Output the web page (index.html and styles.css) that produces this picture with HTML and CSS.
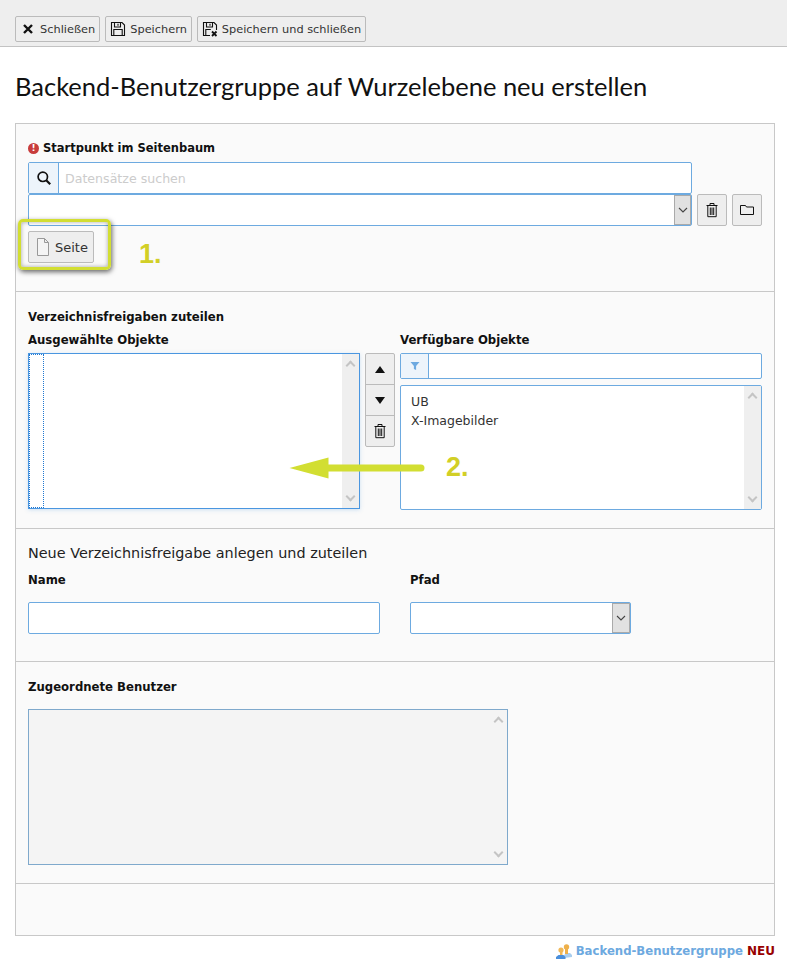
FILE: index.html
```html
<!DOCTYPE html>
<html lang="de">
<head>
  <meta charset="UTF-8">
  <meta name="viewport" content="width=device-width, initial-scale=1.0">
  <title>Backend-Benutzergruppe</title>
  <link rel="stylesheet" href="styles.css">
</head>
<body>

  <div class="toolbar">
    <button class="btn" type="button">
      <svg class="icon" viewBox="0 0 16 16"><path d="M4 4l8 8M12 4l-8 8" fill="none" stroke="#111" stroke-width="2.400"/></svg>
      <span>Schließen</span>
    </button>
    <button class="btn" type="button">
      <svg class="icon" viewBox="0 0 16 16"><path d="M1.500 1.500h10.500l2.500 2.500v10.500h-13zM4.500 1.500v4.500h6v-4.500M8 2.800v2M3.800 14.500v-6h8.400v6" fill="none" stroke="#111" stroke-width="1.100"/></svg>
      <span>Speichern</span>
    </button>
    <button class="btn" type="button">
      <svg class="icon" viewBox="0 0 16 16"><path d="M8 14.500h-6.500v-13h10.500l2.500 2.500v5M4.500 1.500v4.500h6v-4.500M8 2.800v2M3.800 14v-5.500h5" fill="none" stroke="#111" stroke-width="1.100"/><path d="M10 10.500l4.500 4.500M14.500 10.500l-4.500 4.500" stroke="#111" stroke-width="1.800"/></svg>
      <span>Speichern und schließen</span>
    </button>
  </div>

  <h1 class="page-title">Backend-Benutzergruppe auf Wurzelebene neu erstellen</h1>

  <div class="panel">

    <div class="section section-start">
      <div class="label label-required"><span class="required-mark">!</span>Startpunkt im Seitenbaum</div>
      <div class="search-row">
        <span class="addon addon-search">
          <svg class="icon" viewBox="0 0 16 16"><circle cx="6.800" cy="6.800" r="4.700" fill="none" stroke="#111" stroke-width="1.700"/><path d="M10.200 10.200l4 4" stroke="#111" stroke-width="2.200"/></svg>
        </span>
        <input class="search-input" type="text" placeholder="Datensätze suchen">
      </div>
      <div class="select-row">
        <div class="select select-wide"><span class="select-arrow"><svg viewBox="0 0 10 6"><path d="M1 1l4 4 4-4" fill="none" stroke="#444" stroke-width="1.100"/></svg></span></div>
        <button class="btn btn-square" type="button">
          <svg class="icon" viewBox="0 0 16 16"><path d="M2.500 3.500h11M6 3.500v-2h4v2M3.800 3.500v11.200h8.400v-11.200M6.300 5.500v7.500M8 5.500v7.500M9.700 5.500v7.500" fill="none" stroke="#111" stroke-width="1"/></svg>
        </button>
        <button class="btn btn-square" type="button">
          <svg class="icon" viewBox="0 0 16 16"><path d="M1.500 3.500h5l1 1.500h7v7.500h-13z" fill="none" stroke="#111" stroke-width="1"/></svg>
        </button>
      </div>
      <button class="btn btn-page" type="button">
        <svg class="icon icon-page" viewBox="0 0 14 18"><path d="M1.500 .5h7l4 4v13h-11zM8.500 .5v4h4" fill="#f4f4f4" stroke="#999" stroke-width="1"/></svg>
        <span>Seite</span>
      </button>
      <div class="note-box"></div>
      <div class="note note-one">1.</div>
    </div>

    <div class="section section-mounts">
      <div class="label label-group">Verzeichnisfreigaben zuteilen</div>
      <div class="mounts">
        <div class="mounts-left">
          <div class="label label-list">Ausgewählte Objekte</div>
          <div class="listbox listbox-selected">
            <div class="list-focus"></div>
            <div class="scrollbar"><span class="arrow-up"></span><span class="arrow-down"></span></div>
          </div>
        </div>
        <div class="move-buttons">
          <button class="move-btn" type="button"><span class="tri tri-up"></span></button>
          <button class="move-btn" type="button"><span class="tri tri-down"></span></button>
          <button class="move-btn" type="button">
            <svg class="icon" viewBox="0 0 16 16"><path d="M2.500 3.500h11M6 3.500v-2h4v2M3.800 3.500v11.200h8.400v-11.200M6.300 5.500v7.500M8 5.500v7.500M9.700 5.500v7.500" fill="none" stroke="#111" stroke-width="1"/></svg>
          </button>
        </div>
        <div class="mounts-right">
          <div class="label label-list">Verfügbare Objekte</div>
          <div class="filter-row">
            <span class="addon addon-filter">
              <svg class="icon-filter" viewBox="0 0 10 10"><path d="M.5 1h9l-3.400 4v4l-2.200-1v-3z" fill="#6da9e0"/></svg>
            </span>
            <span class="filter-input"></span>
          </div>
          <div class="listbox listbox-available">
            <ul class="items">
              <li>UB</li>
              <li>X-Imagebilder</li>
            </ul>
            <div class="scrollbar"><span class="arrow-up"></span><span class="arrow-down"></span></div>
          </div>
        </div>
      </div>
      <svg class="note-arrow" viewBox="0 0 135 22"><path d="M0 11L39 .5v7h92.500a3.500 3.500 0 0 1 0 7H39v7z" fill="#d2de32"/></svg>
      <div class="note note-two">2.</div>
    </div>

    <div class="section section-new">
      <div class="section-title">Neue Verzeichnisfreigabe anlegen und zuteilen</div>
      <div class="new-fields">
        <div class="field-name">
          <div class="label">Name</div>
          <div class="text-box"></div>
        </div>
        <div class="field-path">
          <div class="label">Pfad</div>
          <div class="select"><span class="select-arrow"><svg viewBox="0 0 10 6"><path d="M1 1l4 4 4-4" fill="none" stroke="#444" stroke-width="1.100"/></svg></span></div>
        </div>
      </div>
    </div>

    <div class="section section-users">
      <div class="label">Zugeordnete Benutzer</div>
      <div class="listbox listbox-users">
        <div class="scrollbar"><span class="arrow-up"></span><span class="arrow-down"></span></div>
      </div>
    </div>

    <div class="section section-empty"></div>
  </div>

  <div class="footer">
    <svg class="icon-group" viewBox="0 0 16 16">
      <path d="M8 15v-3l3-2h3l2 2v2z" fill="#a9cdee"/>
      <circle cx="10.500" cy="4" r="2.700" fill="#eeb04a"/>
      <path d="M9 6h3v5H9z" fill="#eeb04a"/>
      <circle cx="5" cy="7" r="2.600" fill="#f0b858"/>
      <path d="M4 9h2.500v3H4z" fill="#f0b858"/>
      <path d="M0 16v-2l2.500-2h5l2 2v2z" fill="#4a8fdc"/>
    </svg>
    <span class="footer-type">Backend-Benutzergruppe</span>
    <span class="footer-new">NEU</span>
  </div>

</body>
</html>
```

FILE: styles.css
```css
* {
  box-sizing: border-box;
}

html, body {
  height: 964px;
  overflow: hidden;
}

body {
  font-family: "DejaVu Sans", Verdana, sans-serif;
  font-size: 11px;
  color: #111;
  background-color: #fff;
  margin: 0;
  padding: 0;
}

.toolbar {
  display: flex;
  gap: 5px;
  height: 47px;
  padding: 16px 15px 0;
  background-color: #eee;
  border-bottom: 1px solid #c3c3c3;
}

.btn {
  display: flex;
  align-items: center;
  gap: 4px;
  height: 26px;
  padding: 0 4px;
  font-family: inherit;
  font-size: 11.350px;
  color: #333;
  background-color: #eee;
  border: 1px solid #bbb;
  border-radius: 2px;
}

.icon {
  width: 16px;
  height: 16px;
  flex: none;
}

.page-title {
  margin: 24px 0 22px 15px;
  font-family: Lato, sans-serif;
  font-size: 25.500px;
  line-height: 30px;
  font-weight: 400;
  color: #111;
}

.panel {
  width: 760px;
  height: 813px;
  margin-left: 15px;
  background-color: #fafafa;
  border: 1px solid #c8c8c8;
}

.section {
  position: relative;
  padding: 0 12px;
  border-bottom: 1px solid #c8c8c8;
}

.section-start {
  height: 168px;
  padding-top: 17px;
}

.section-mounts {
  height: 237px;
  padding-top: 18px;
}

.section-new {
  height: 133px;
  padding-top: 16px;
}

.section-users {
  height: 222px;
  padding-top: 18px;
}

.section-empty {
  height: 51px;
  border-bottom: none;
}

.label {
  font-weight: 700;
  font-size: 11.700px;
  line-height: 14px;
  color: #111;
}

.label-required {
  display: flex;
  align-items: center;
  gap: 4px;
  font-size: 11.500px;
}

.required-mark {
  width: 11px;
  height: 11px;
  font-size: 9px;
  line-height: 11px;
  text-align: center;
  color: #fff;
  background-color: #c83c3c;
  border-radius: 50%;
}

.search-row {
  display: flex;
  width: 664px;
  height: 32px;
  margin-top: 7px;
  background-color: #fff;
  border: 1px solid #6daae0;
  border-radius: 2px;
}

.addon {
  display: flex;
  align-items: center;
  justify-content: center;
  flex: none;
  background-color: #edf4fb;
  border-right: 1px solid #6daae0;
}

.addon-search {
  width: 30px;
}

.search-input {
  flex: 1;
  padding: 0 6px;
  font-family: inherit;
  font-size: 12.600px;
  border: none;
  outline: none;
  background: transparent;
}

.search-input::placeholder {
  color: #ccc;
}

.select-row {
  display: flex;
  gap: 5px;
}

.select {
  display: flex;
  justify-content: flex-end;
  height: 32px;
  background-color: #fff;
  border: 1px solid #6daae0;
  border-radius: 2px;
}

.select-wide {
  width: 664px;
}

.select-arrow {
  display: flex;
  align-items: center;
  justify-content: center;
  width: 17px;
  background-color: #e1e1e1;
  border: 1px solid #aaa;
}

.select-arrow svg {
  width: 10px;
  height: 6px;
}

.btn-square {
  justify-content: center;
  width: 30px;
  height: 32px;
  padding: 0;
}

.btn-page {
  height: 32px;
  width: 66px;
  margin-top: 5px;
  padding: 0 6px 0 7px;
  gap: 5px;
  font-size: 13px;
}

.icon-page {
  width: 14px;
  height: 18px;
}

.note-box {
  position: absolute;
  left: 2px;
  top: 95px;
  width: 93px;
  height: 51px;
  border: 3px solid #d2de32;
  border-radius: 5px;
  box-shadow: 1px 2px 5px rgba(0, 0, 0, 0.6), inset 0 0 4px rgba(0, 0, 0, 0.35);
}

.note {
  position: absolute;
  font-family: "Liberation Sans", Arial, sans-serif;
  font-size: 27px;
  line-height: 28px;
  font-weight: 700;
  color: #d2cf26;
}

.note-one {
  left: 123px;
  top: 116px;
}

.note-two {
  left: 430px;
  top: 161px;
}

.note-arrow {
  position: absolute;
  left: 273px;
  top: 165px;
  width: 136px;
  height: 22px;
  z-index: 2;
}

.mounts {
  display: flex;
  gap: 5px;
  margin-top: 9px;
}

.mounts-left {
  width: 332px;
}

.label-list {
  height: 14px;
}

.label-group {
  height: 14px;
}

.listbox {
  position: relative;
  background-color: #fff;
  border: 1px solid #6daae0;
}

.listbox-selected {
  height: 156px;
  margin-top: 6px;
  border-color: #4a96e0;
  box-shadow: 0 1px 4px rgba(74, 150, 224, 0.25);
}

.list-focus {
  width: 15px;
  height: 100%;
  border: 1px dotted #1f78d1;
}

.scrollbar {
  position: absolute;
  top: 0;
  right: 0;
  bottom: 0;
  width: 17px;
  background-color: #efefef;
}

.arrow-up,
.arrow-down {
  position: absolute;
  left: 5px;
  width: 7px;
  height: 7px;
  border-left: 2px solid #c4c4c4;
  border-top: 2px solid #c4c4c4;
  transform: rotate(45deg);
}

.arrow-up {
  top: 8px;
}

.arrow-down {
  bottom: 8px;
  transform: rotate(225deg);
}

.move-buttons {
  display: flex;
  flex-direction: column;
  width: 30px;
  height: 94px;
  margin-top: 20px;
  background-color: #eee;
  border: 1px solid #bbb;
  border-radius: 2px;
}

.move-btn {
  display: flex;
  align-items: center;
  justify-content: center;
  flex: 1;
  padding: 0;
  background: transparent;
  border: none;
  border-bottom: 1px solid #bbb;
}

.move-btn:last-child {
  border-bottom: none;
}

.tri {
  width: 0;
  height: 0;
  border-left: 5px solid transparent;
  border-right: 5px solid transparent;
}

.tri-up {
  border-bottom: 7px solid #111;
}

.tri-down {
  border-top: 7px solid #111;
}

.mounts-right {
  width: 362px;
}

.filter-row {
  display: flex;
  height: 26px;
  margin-top: 6px;
  background-color: #fff;
  border: 1px solid #6daae0;
  border-radius: 2px;
}

.addon-filter {
  width: 28px;
}

.icon-filter {
  width: 10px;
  height: 10px;
}

.filter-input {
  flex: 1;
}

.listbox-available {
  height: 125px;
  margin-top: 6px;
  border-radius: 2px;
}

.items {
  list-style: none;
  margin: 0;
  padding: 6px 10px;
  font-size: 12.500px;
  color: #333;
}

.items li {
  height: 19px;
  line-height: 19px;
}

.section-title {
  font-size: 14.400px;
  line-height: 16px;
  color: #222;
}

.new-fields {
  display: flex;
  gap: 30px;
  margin-top: 12px;
}

.field-name {
  width: 352px;
}

.field-path {
  width: 221px;
}

.text-box {
  height: 32px;
  margin-top: 15px;
  background-color: #fff;
  border: 1px solid #6daae0;
  border-radius: 2px;
}

.field-path .select {
  margin-top: 15px;
}

.field-path .select-arrow {
  width: 18px;
}

.listbox-users {
  width: 480px;
  height: 156px;
  margin-top: 15px;
  background-color: #f4f4f4;
  border-color: #7fa9cc;
}

.listbox-users .scrollbar {
  background-color: #f4f4f4;
}

.footer {
  display: flex;
  justify-content: flex-end;
  align-items: center;
  gap: 4px;
  height: 16px;
  margin-top: 7px;
  padding-right: 12px;
  font-size: 11.700px;
  font-weight: 700;
}

.icon-group {
  width: 16px;
  height: 16px;
}

.footer-type {
  color: #6da9e0;
}

.footer-new {
  font-size: 12px;
  color: #980000;
}
```
